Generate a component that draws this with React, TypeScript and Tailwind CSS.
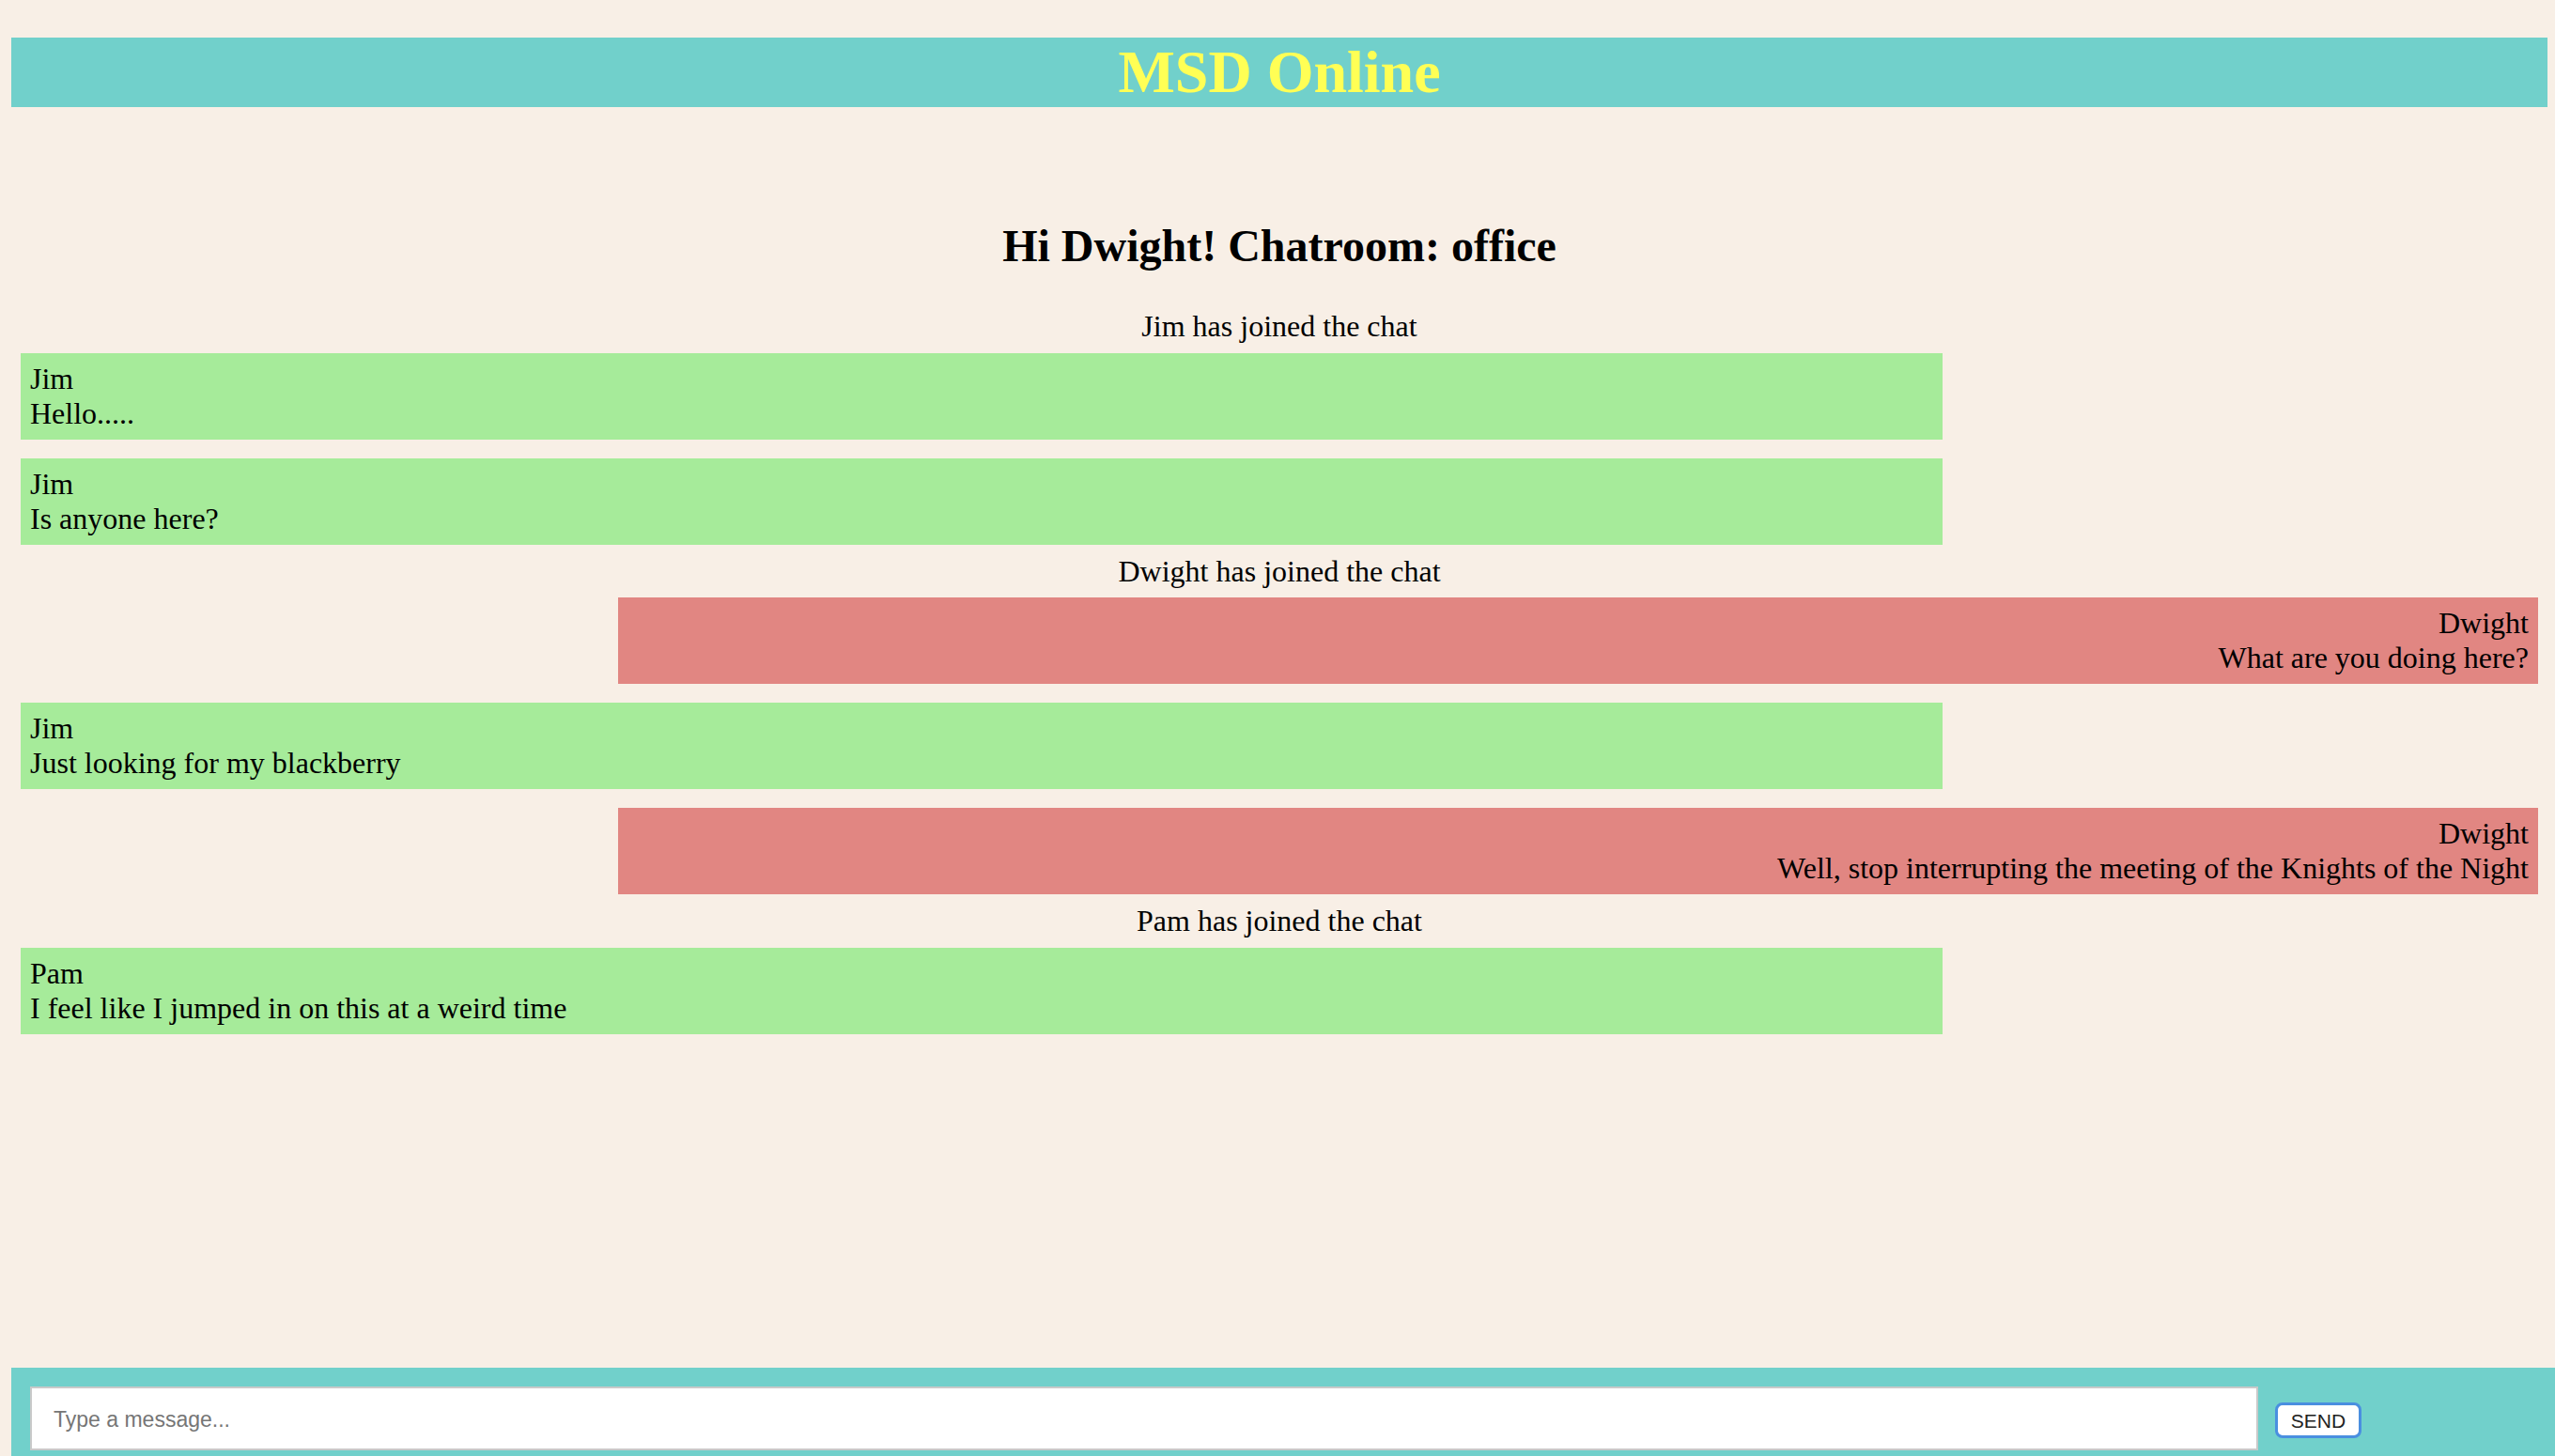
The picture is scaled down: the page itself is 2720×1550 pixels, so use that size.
import { useState } from 'react';

interface Message {
  id: number;
  kind: 'system' | 'other' | 'self';
  user?: string;
  text: string;
}

const messages: Message[] = [
  { id: 1, kind: 'system', text: 'Jim has joined the chat' },
  { id: 2, kind: 'other', user: 'Jim', text: 'Hello.....' },
  { id: 3, kind: 'other', user: 'Jim', text: 'Is anyone here?' },
  { id: 4, kind: 'system', text: 'Dwight has joined the chat' },
  { id: 5, kind: 'self', user: 'Dwight', text: 'What are you doing here?' },
  { id: 6, kind: 'other', user: 'Jim', text: 'Just looking for my blackberry' },
  { id: 7, kind: 'self', user: 'Dwight', text: 'Well, stop interrupting the meeting of the Knights of the Night' },
  { id: 8, kind: 'system', text: 'Pam has joined the chat' },
  { id: 9, kind: 'other', user: 'Pam', text: 'I feel like I jumped in on this at a weird time' },
];

export default function App() {
  const [draft, setDraft] = useState('');

  return (
    <div className="min-h-[1550px] flex flex-col bg-[#f8efe6] text-black font-['Liberation_Serif',serif]">
      <header className="mt-[40px] ml-[12px] w-[2700px] h-[74px] bg-[#71d0cb] flex items-center justify-center">
        <h1 className="text-[64px] leading-none font-bold text-[#ffff55]">MSD Online</h1>
      </header>

      <main className="flex-1 pt-[120px] pl-[22px] pr-[18px]">
        <h2 className="text-[48px] font-bold text-center leading-[55px] mb-[40px]">Hi Dwight! Chatroom: office</h2>

        <div className="flex flex-col text-[32px] leading-[36.9px]">
          {messages.map((m) => {
            if (m.kind === 'system') {
              return (
                <div key={m.id} className="text-center">
                  {m.text}
                </div>
              );
            }
            const mine = m.kind === 'self';
            return (
              <div
                key={m.id}
                className={
                  mine
                    ? 'self-end w-[2044px] my-[10px] px-[10px] py-[9px] bg-[#e18682] text-right'
                    : 'self-start w-[2046px] my-[10px] px-[10px] py-[9px] bg-[#a6eb9a]'
                }
              >
                <div>{m.user}</div>
                <div>{m.text}</div>
              </div>
            );
          })}
        </div>
      </main>

      <footer className="ml-[12px] w-[2708px] h-[94px] bg-[#71d0cb] flex items-start pt-[20px] pl-[20px]">
        <input
          type="text"
          value={draft}
          onChange={(e) => setDraft(e.target.value)}
          placeholder="Type a message..."
          className="w-[2372px] h-[68px] bg-white border-2 border-[#c9c9c9] px-[23px] pt-[3px] text-[23px] font-['Liberation_Sans',Arial,sans-serif] text-black placeholder:text-[#767676] outline-none"
        />
        <button
          type="button"
          className="ml-[18px] mt-[17px] w-[92px] h-[38px] rounded-[8px] bg-white border-[3px] border-[#4a8fe0] text-[21px] leading-none text-[#222] font-['Liberation_Sans',Arial,sans-serif] flex items-center justify-center"
        >
          SEND
        </button>
      </footer>
    </div>
  );
}
